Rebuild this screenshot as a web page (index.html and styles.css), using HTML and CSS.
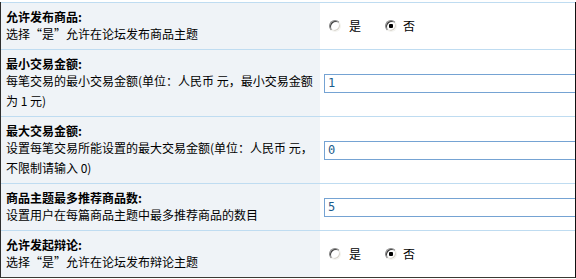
FILE: index.html
```html
<!DOCTYPE html>
<html lang="zh-CN">
<head>
<meta charset="utf-8">
<title>商品设置</title>
<link rel="stylesheet" href="styles.css">
</head>
<body>
<div class="settings">
  <div class="row short">
    <div class="label">
      <div class="title">允许发布商品:</div>
      <div class="desc">选择“是”允许在论坛发布商品主题</div>
    </div>
    <div class="field">
      <label class="opt"><input type="radio" name="trade" class="radio"><span>是</span></label>
      <label class="opt"><input type="radio" name="trade" class="radio" checked><span>否</span></label>
    </div>
  </div>
  <div class="row tall">
    <div class="label">
      <div class="title">最小交易金额:</div>
      <div class="desc">每笔交易的最小交易金额(单位：人民币 元，最小交易金额<br>为 1 元)</div>
    </div>
    <div class="field">
      <input type="text" class="text" value="1">
    </div>
  </div>
  <div class="row tall">
    <div class="label">
      <div class="title">最大交易金额:</div>
      <div class="desc">设置每笔交易所能设置的最大交易金额(单位：人民币 元，<br>不限制请输入 0)</div>
    </div>
    <div class="field">
      <input type="text" class="text" value="0">
    </div>
  </div>
  <div class="row short">
    <div class="label">
      <div class="title">商品主题最多推荐商品数:</div>
      <div class="desc">设置用户在每篇商品主题中最多推荐商品的数目</div>
    </div>
    <div class="field">
      <input type="text" class="text" value="5">
    </div>
  </div>
  <div class="row short">
    <div class="label">
      <div class="title">允许发起辩论:</div>
      <div class="desc">选择“是”允许在论坛发布辩论主题</div>
    </div>
    <div class="field">
      <label class="opt"><input type="radio" name="debate" class="radio"><span>是</span></label>
      <label class="opt"><input type="radio" name="debate" class="radio" checked><span>否</span></label>
    </div>
  </div>
</div>
</body>
</html>
```
FILE: styles.css
```css
html, body {
  margin: 0;
  padding: 0;
  background: #fff;
}
body {
  font-family: "Noto Sans CJK SC", "Liberation Sans", sans-serif;
  font-size: 12px;
  color: #000;
}
.settings {
  margin-top: 2px;
  width: 574px;
  border-left: 1px solid #2e2e2e;
  border-right: 1px solid #111;
  border-bottom: 1px solid #3a3a33;
}
.row {
  display: grid;
  grid-template-columns: 319px 255px;
  border-top: 1px solid #bfdcf1;
}
.row.short { height: 46px; }
.row.tall { height: 66px; }
.label {
  background: #eff3f7;
  padding-left: 5px;
  display: flex;
  flex-direction: column;
  justify-content: center;
}
.title {
  font-weight: bold;
  line-height: 15px;
}
.desc {
  line-height: 20px;
  white-space: nowrap;
}
.field {
  display: flex;
  align-items: center;
  padding-left: 4px;
  overflow: hidden;
}
.text {
  flex: none;
  box-sizing: border-box;
  width: 300px;
  height: 19px;
  margin: 0;
  padding: 0 3px;
  border: 1px solid #75a3d3;
  background: #fff;
  color: #1b5c8c;
  font-family: "DejaVu Sans Mono", monospace;
  font-size: 12px;
  outline: none;
}
.opt {
  display: flex;
  align-items: center;
  margin-right: 24px;
  line-height: 14px;
}
.radio {
  appearance: none;
  -webkit-appearance: none;
  box-sizing: border-box;
  width: 12px;
  height: 12px;
  margin: 0 8px 0 5px;
  border-radius: 50%;
  border: 1px solid;
  border-color: #888 #f4f4f0 #f4f4f0 #888;
  box-shadow: inset 1px 1px 0 #404040, inset -1px -1px 0 #d8d4cc;
  background: #fff;
}
.opt + .opt .radio {
  margin-left: 0;
  margin-right: 6px;
}
.radio:checked {
  background: radial-gradient(circle at center, #000 0, #000 2px, #fff 2.5px);
}
```
